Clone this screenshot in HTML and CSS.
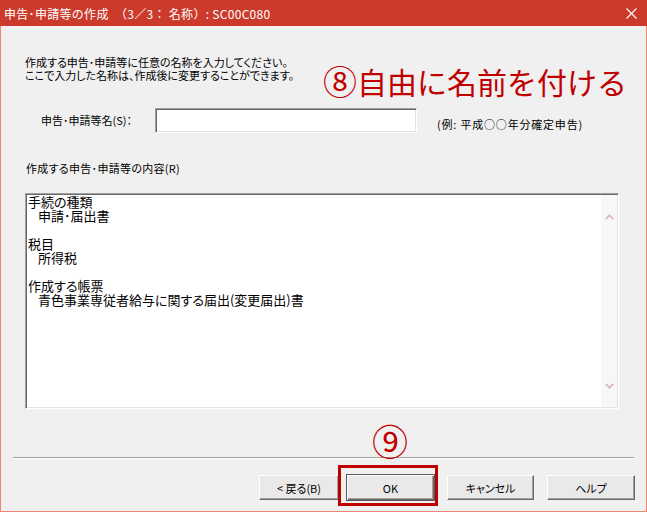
FILE: index.html
```html
<!DOCTYPE html>
<html lang="ja">
<head>
<meta charset="utf-8">
<title>申告･申請等の作成</title>
<link rel="stylesheet" href="styles.css">
</head>
<body>
<div class="window">
  <div class="titlebar">
    <span class="title">申告･申請等の作成　（3／3： 名称）: SC00C080</span>
    <svg class="close" width="11" height="11" viewBox="0 0 11 11"><path d="M0.5 0.5 L10.5 10.5 M10.5 0.5 L0.5 10.5" stroke="#fff" stroke-width="1.1" fill="none"/></svg>
  </div>
  <div class="client">
    <p class="intro">作成する申告･申請等に任意の名称を入力してください。<br>ここで入力した名称は、作成後に変更することができます。</p>
    <div class="name-row">
      <span class="name-label">申告･申請等名(S)：</span>
      <div class="name-input"></div>
      <span class="example">(例: 平成○○年分確定申告)</span>
    </div>
    <div class="content-label">作成する申告･申請等の内容(R)</div>
    <div class="memo">
      <div class="memo-text">
        <div class="line">手続の種類</div>
        <div class="line indent">申請･届出書</div>
        <div class="line blank"></div>
        <div class="line">税目</div>
        <div class="line indent">所得税</div>
        <div class="line blank"></div>
        <div class="line">作成する帳票</div>
        <div class="line indent">青色事業専従者給与に関する届出(変更届出)書</div>
      </div>
      <div class="scrollbar">
        <svg width="9" height="6" viewBox="0 0 9 6"><path d="M0.8 5.2 L4.5 1.4 L8.2 5.2" stroke="#dab9c1" stroke-width="1.8" fill="none"/></svg>
        <svg width="9" height="6" viewBox="0 0 9 6"><path d="M0.8 0.8 L4.5 4.6 L8.2 0.8" stroke="#dab9c1" stroke-width="1.8" fill="none"/></svg>
      </div>
    </div>
    <div class="separator"></div>
    <div class="buttons">
      <button class="btn btn-back">&lt; 戻る(B)</button>
      <button class="btn btn-ok">OK</button>
      <button class="btn btn-cancel">キャンセル</button>
      <button class="btn btn-help">ヘルプ</button>
    </div>
    <div class="note note-8"><span class="circ">⑧</span>自由に名前を付ける</div>
    <div class="note note-9">⑨</div>
    <div class="highlight"></div>
  </div>
</div>
</body>
</html>
```

FILE: styles.css
```css
body {
  margin: 0;
  background: #f0f0f0;
}
.window {
  width: 647px;
  height: 512px;
  display: flex;
  flex-direction: column;
  background: #f0f0f0;
  font-family: "Noto Sans CJK JP", "Noto Sans", sans-serif;
  color: #000;
  box-sizing: border-box;
}
.titlebar {
  height: 26px;
  flex: none;
  background: #cb3a2b;
  color: #fff;
  display: flex;
  align-items: center;
  justify-content: space-between;
  padding: 0 10px 0 4px;
  font-size: 12px;
}
.title {
  letter-spacing: 0.3px;
}
.close {
  display: block;
}
.client {
  flex: 1;
  position: relative;
  border: 1px solid #ef8574;
  border-top: none;
  font-size: 11px;
  font-feature-settings: "palt";
}
.intro {
  margin: 30px 0 0 24px;
  width: fit-content;
  line-height: 13px;
}
.name-row {
  display: flex;
  margin: 26px 0 0 40px;
  height: 25px;
}
.name-label {
  width: 114px;
  align-self: center;
  line-height: 13px;
}
.name-input {
  width: 262px;
  height: 25px;
  box-sizing: border-box;
  background: #fff;
  border: 1px solid;
  border-color: #a0a0a0 #fff #fff #a0a0a0;
  box-shadow: inset 1px 1px #696969, inset -1px -1px #e3e3e3;
}
.example {
  margin-left: 20px;
  align-self: flex-end;
  margin-bottom: 2px;
  line-height: 13px;
  letter-spacing: 0.8px;
}
.content-label {
  margin: 29px 0 0 25px;
  width: fit-content;
  line-height: 13px;
  letter-spacing: 0.3px;
}
.memo {
  margin: 18px 0 0 24px;
  width: 594px;
  height: 216px;
  box-sizing: border-box;
  display: flex;
  background: #fff;
  border: 1px solid;
  border-color: #a0a0a0 #fff #fff #a0a0a0;
  box-shadow: inset 1px 1px #696969, inset -1px -1px #e3e3e3;
  padding: 1px 1px 1px 2px;
}
.memo-text {
  flex: 1;
  font-size: 13px;
  line-height: 14px;
}
.line {
  height: 14px;
  white-space: nowrap;
}
.indent {
  padding-left: 10px;
}
.scrollbar {
  width: 16px;
  background: #f7f7f7;
  display: flex;
  flex-direction: column;
  justify-content: space-between;
  align-items: center;
  padding: 19px 0 18px;
}
.scrollbar svg {
  display: block;
}
.separator {
  margin: 48px 12px 0 12px;
  border-top: 1px solid #a0a0a0;
  border-bottom: 1px solid #fff;
}
.buttons {
  display: flex;
  justify-content: flex-end;
  align-items: center;
  margin: 15px 11px 0 0;
}
.btn {
  height: 25px;
  box-sizing: border-box;
  background: #e9e9e9;
  border: 1px solid;
  border-color: #fff #696969 #696969 #fff;
  box-shadow: inset -1px -1px #a0a0a0;
  font-family: inherit;
  font-size: 11px;
  font-feature-settings: "palt";
  color: #000;
  padding: 0;
}
.btn-back {
  width: 80px;
}
.btn-ok {
  width: 89px;
  height: 27px;
  margin-left: 7px;
  border: 1px solid #5a5a5a;
  box-shadow: inset 1px 1px #fff, inset -1px -1px #696969, inset -2px -2px #a0a0a0;
}
.btn-cancel {
  width: 87px;
  margin-left: 12px;
}
.btn-help {
  width: 88px;
  margin-left: 13px;
}
.note {
  position: absolute;
  color: #c00000;
  font-feature-settings: normal;
}
.note-8 {
  left: 322px;
  top: 40px;
  font-size: 30px;
  line-height: 30px;
  white-space: nowrap;
}
.circ {
  font-size: 34px;
  line-height: 0;
  vertical-align: -1px;
}
.note-9 {
  left: 371px;
  top: 396px;
  font-size: 36px;
  line-height: 36px;
}
.highlight {
  position: absolute;
  left: 337px;
  top: 439px;
  width: 100px;
  height: 41px;
  box-sizing: border-box;
  border: 3px solid #c00000;
}
```
